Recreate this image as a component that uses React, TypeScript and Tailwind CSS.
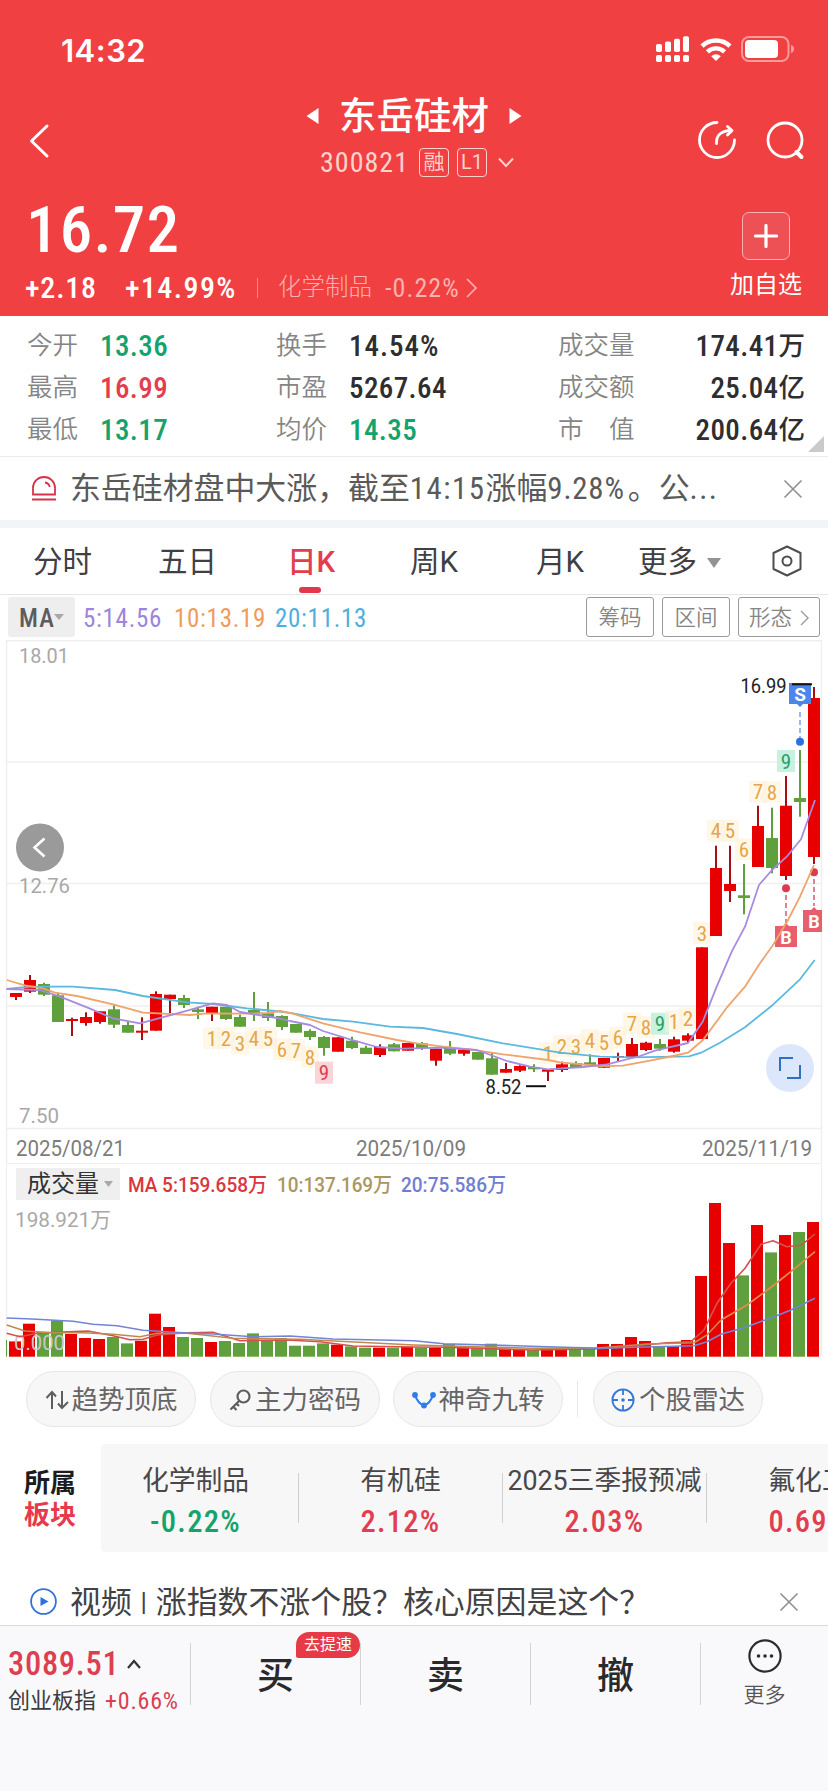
import type { ReactNode } from "react";

const RED = "#e80000";
const GREEN = "#5f9f3c";

// [direction, body top, body bottom, high, low]
const candles: [number, number, number, number, number][] = [
  [1, 353, 357, 353, 360], [1, 340, 351.7, 335, 353], [0, 344, 354.7, 342.7, 356], [0, 355.3, 382, 352.7, 382],
  [1, 379, 381, 377.7, 396], [1, 377, 383, 372.3, 385.7], [1, 371.3, 382, 371.3, 383.7], [0, 369.3, 384.7, 365.3, 388],
  [0, 385, 392.7, 381.7, 392.7], [1, 390.7, 392.7, 377.3, 400], [1, 354, 390.7, 351.3, 390.7], [1, 354.7, 359, 354.7, 373],
  [0, 358, 365, 355, 368], [0, 369.3, 372, 366.7, 379], [1, 366.7, 373, 366.7, 381], [0, 366.7, 379, 366.7, 380],
  [0, 377, 386.7, 374.7, 386.7], [0, 370, 374, 352, 381], [0, 373.3, 378, 362, 381], [0, 376, 387, 375.3, 390],
  [0, 384, 392.7, 384, 392.7], [0, 391, 397, 389.3, 400], [0, 397, 408, 396, 415.7], [1, 397.3, 411.7, 397.3, 411.7],
  [0, 400.7, 408, 396.7, 409], [0, 407.7, 414, 405.7, 414], [1, 407, 415, 404.3, 417], [0, 404.3, 411.3, 403, 411.3],
  [1, 403, 410.7, 403, 410.7], [0, 403.3, 408, 402, 410], [1, 408.7, 420.7, 408.7, 425.7], [0, 407.7, 413.7, 401, 415],
  [1, 409.7, 413.7, 408, 415.7], [0, 412, 419.7, 412, 419.7], [0, 418.3, 434.7, 412.7, 434.7], [1, 429, 432.7, 423, 432.7],
  [1, 426, 430.7, 425.3, 432], [0, 427, 429.3, 424.3, 432], [1, 429.3, 431.7, 429.3, 441], [1, 424.3, 430, 421.7, 432],
  [0, 423, 427, 421.3, 428], [0, 422.3, 425.3, 414.3, 426], [1, 418, 427.7, 418, 427.7], [1, 416, 418, 412.7, 421.7],
  [1, 404, 417, 398, 417], [1, 402.7, 410, 401.7, 411], [0, 404, 408.7, 399, 410.7], [1, 399.3, 411.7, 396.7, 412.7],
  [1, 395.3, 400.7, 393.3, 402.3], [1, 307.3, 399, 307.3, 399], [1, 228, 296, 205.7, 296], [1, 244, 251, 205.7, 262],
  [0, 255.3, 258, 224, 274.3], [1, 186, 227, 165.7, 227], [0, 198, 228, 167.7, 233.3], [1, 165.7, 236, 136, 240],
  [0, 158, 162, 110, 176.7], [1, 58, 217, 47, 224],
];

const volumes = [
  15.3, 33, 25, 36.3, 22.7, 18.7, 17.7, 19.7, 13.3, 16, 43, 29.7, 19.7, 18.7, 14.7, 15.7, 13.7, 23.3, 16, 18.7,
  11, 11, 13.3, 12, 10.3, 9, 9, 9, 10, 9, 8.7, 12.7, 9.3, 9.3, 13, 8, 7.3, 6.7, 7.7, 7.7,
  7.3, 8.7, 12.7, 12.7, 19.7, 15.7, 10, 10.7, 16.7, 80.7, 153.7, 113.7, 81.3, 131.7, 104.3, 121.7, 124.7, 134.7,
];

// nine-turn counters: [candle index, label, center y]
const turns: [number, string, number][] = [
  [14, "1", 398.3], [15, "2", 398.3], [16, "3", 403.3], [17, "4", 398.3], [18, "5", 398.3], [19, "6", 409],
  [20, "7", 410], [21, "8", 417.3], [22, "9", 432.7],
  [38, "1", 413.3], [39, "2", 406], [40, "3", 406], [41, "4", 400], [42, "5", 402], [43, "6", 397.7],
  [44, "7", 383.3], [45, "8", 387], [46, "9", 383.7], [47, "1", 381.3], [48, "2", 378.3], [49, "3", 293],
  [50, "4", 190.7], [51, "5", 190.7], [52, "6", 209], [53, "7", 151.7], [54, "8", 152.3], [55, "9", 121],
];

const stats = [
  [
    { label: "今开", value: "13.36", color: "text-[#13a36b]" },
    { label: "最高", value: "16.99", color: "text-[#e23e50]" },
    { label: "最低", value: "13.17", color: "text-[#13a36b]" },
  ],
  [
    { label: "换手", value: "14.54%", color: "text-[#2e2e30]" },
    { label: "市盈", value: "5267.64", color: "text-[#2e2e30]" },
    { label: "均价", value: "14.35", color: "text-[#13a36b]" },
  ],
];

const totals = [
  { label: "成交量", value: "174.41", unit: "万" },
  { label: "成交额", value: "25.04", unit: "亿" },
  { label: "市　值", value: "200.64", unit: "亿" },
];

const sectors = [
  { name: "化学制品", value: "-0.22%", color: "text-[#13a36b]" },
  { name: "有机硅", value: "2.12%", color: "text-[#e23e50]" },
  { name: "2025三季报预减", value: "2.03%", color: "text-[#e23e50]" },
  { name: "氟化工", value: "0.69%", color: "text-[#e23e50]" },
];

const Num = ({ className = "", children }: { className?: string; children: ReactNode }) => (
  <span className={`inline-block whitespace-nowrap [font-stretch:75%] ${className}`}>{children}</span>
);

// svg label stretched to an exact width
const Label = ({ x, y, w, size = 21, fill = "#a8a8a8", children }: { x: number; y: number; w: number; size?: number; fill?: string; children: string }) => (
  <text x={x} y={y} fontSize={size} fill={fill} textLength={w} lengthAdjust="spacingAndGlyphs">{children}</text>
);

const Close = () => (
  <svg className="w-5 h-5" viewBox="0 0 20 20" fill="none" stroke="#8f8f8f" strokeWidth="1.6">
    <path d="M1.5 1.5 18.5 18.5M18.5 1.5 1.5 18.5" />
  </svg>
);

const StatusBar = () => (
  <div className="h-[98px] flex items-center justify-between pl-[61px] pr-[33px]">
    <span className="font-['Inter'] font-semibold text-[31px] leading-none tracking-[0.5px] pt-[2px]">14:32</span>
    <div className="flex items-center">
      <svg className="w-[34px] h-[28px]" viewBox="0 0 34 28" fill="white">
        {[0, 1, 2, 3].map((i) => (
          <g key={i}>
            <rect x={i * 9} y={9 - i * 2.6} width="6" height={8 + i * 2.6} rx="1.8" />
            <rect x={i * 9} y="20" width="6" height="7" rx="1.8" />
          </g>
        ))}
      </svg>
      <svg className="w-[32px] h-[24px] ml-[10px]" viewBox="0 0 32 24" fill="none" stroke="white" strokeWidth="5">
        <path d="M2 9.2a20 20 0 0 1 28 0" strokeWidth="4.6" />
        <path d="M7.4 14.8a12.4 12.4 0 0 1 17.2 0" strokeWidth="4.4" />
        <path d="M16 24l-4.8-4.8a6.6 6.6 0 0 1 9.6 0z" fill="white" stroke="none" />
      </svg>
      <svg className="w-[54px] h-[26px] ml-[9px]" viewBox="0 0 54 26">
        <rect x="1" y="1" width="46.5" height="24" rx="7" fill="none" stroke="#f79a9b" strokeWidth="2" />
        <rect x="4" y="4" width="33" height="18" rx="4" fill="white" />
        <path d="M50 9v8c2-.6 3-2 3-4s-1-3.400-3-4z" fill="#f79a9b" />
      </svg>
    </div>
  </div>
);

const Header = () => (
  <header className="h-[316px] bg-[#f04042] text-white">
    <StatusBar />
    <div className="h-[88px] flex justify-between px-[28px]">
      <svg className="w-[22px] h-[36px] mt-[25px]" viewBox="0 0 22 36" fill="none" stroke="white" strokeWidth="3" strokeLinecap="round" strokeLinejoin="round">
        <path d="M19 3 3.500 18 19 33" />
      </svg>
      <div className="flex flex-col items-center pl-[81px]">
        <div className="flex items-center h-[36px]">
          <svg className="w-[13px] h-[18px]" viewBox="0 0 13 18" fill="white"><path d="M12.500 1v16L.5 9z" /></svg>
          <h1 className="text-[37.500px] leading-none font-medium mx-[20px] pt-[2px]">东岳硅材</h1>
          <svg className="w-[13px] h-[18px]" viewBox="0 0 13 18" fill="white"><path d="M.5 1v16l12-8z" /></svg>
        </div>
        <div className="flex items-center h-[30px] mt-[13px] ml-[6px] text-[#fdd3cc]">
          <Num className="text-[28px] leading-none tracking-[1px] pt-[2px]">300821</Num>
          <span className="w-[30px] h-[29px] ml-[10px] border border-[#fdd3cc] rounded-[4px] flex items-center justify-center text-[21px] leading-none">融</span>
          <span className="w-[30px] h-[29px] ml-[8px] border border-[#fdd3cc] rounded-[4px] flex items-center justify-center text-[20px] leading-none">L1</span>
          <svg className="w-[16px] h-[11px] ml-[11px]" viewBox="0 0 16 11" fill="none" stroke="#fdd3cc" strokeWidth="2"><path d="M1 1.500 8 9l7-7.500" /></svg>
        </div>
      </div>
      <div className="flex items-start pt-[22px] -mr-[6px]">
        <svg className="w-[40px] h-[40px]" viewBox="0 0 40 40" fill="none" stroke="white" strokeWidth="2.800" strokeLinecap="round" strokeLinejoin="round">
          <path d="M20 2.500A17.500 17.500 0 1 0 37.500 20" />
          <path d="M19.500 23.500c-.4-8 4.500-13 15-13" />
          <path d="m30.500 6.500 4.500 4-4.500 4.500" />
        </svg>
        <svg className="w-[40px] h-[40px] ml-[29px]" viewBox="0 0 40 40" fill="none" stroke="white" strokeWidth="2.800" strokeLinecap="round">
          <circle cx="19" cy="20" r="17" />
          <path d="m30.500 32 5 5" strokeWidth="4" />
        </svg>
      </div>
    </div>
    <div className="h-[130px] flex justify-between">
      <div className="pl-[26px]">
        <div className="h-[84px] flex items-center pt-[4px]">
          <Num className="text-[65px] leading-none font-medium tracking-[1.200px]">16.72</Num>
        </div>
        <div className="h-[36px] flex items-center text-[30px] leading-none">
          <Num className="font-medium tracking-[0.8px] w-[100px] -ml-px">+2.18</Num>
          <Num className="font-medium tracking-[1.400px] w-[132px]">+14.99%</Num>
          <span className="w-px h-5 bg-[#f58a8b]" />
          <span className="ml-[20px] text-[23.500px] font-light text-[#fbb3b0]">化学制品</span>
          <Num className="ml-[13px] text-[26px] text-[#fbb3b0] tracking-[1.100px]">-0.22%</Num>
          <svg className="w-[12px] h-[20px] ml-[6px]" viewBox="0 0 12 20" fill="none" stroke="#fbb3b0" strokeWidth="1.600"><path d="m1 1 9 9-9 9" /></svg>
        </div>
      </div>
      <div className="flex flex-col items-center pt-[26px] pr-[26px]">
        <div className="w-[48px] h-[48px] border border-[#f9b5b5] rounded-[7px] bg-[#ee5155] flex items-center justify-center">
          <svg className="w-6 h-6" viewBox="0 0 24 24" stroke="white" strokeWidth="3.200" strokeLinecap="round"><path d="M12 1.500v21M1.500 12h21" /></svg>
        </div>
        <span className="text-[24px] leading-none mt-[13px]">加自选</span>
      </div>
    </div>
  </header>
);

const Stats = () => (
  <section className="relative h-[141px] border-b border-[#ebebeb] flex pt-[9px] pl-[27px] leading-none">
    {stats.map((column, c) => (
      <div key={c} className={c === 0 ? "w-[249px]" : "w-[282px]"}>
        {column.map((s) => (
          <div key={s.label} className="h-[42px] flex items-center">
            <span className="w-[73px] text-[25.500px] [font-weight:350] text-[#858585]">{s.label}</span>
            <Num className={`text-[29px] font-medium ${s.value.endsWith("%") ? "tracking-[1px]" : "tracking-[0.4px]"} ${s.color}`}>{s.value}</Num>
          </div>
        ))}
      </div>
    ))}
    <div className="w-[247px]">
      {totals.map((s) => (
        <div key={s.label} className="h-[42px] flex items-center justify-between">
          <span className="text-[25.500px] [font-weight:350] text-[#858585]">{s.label}</span>
          <span className="flex items-center text-[#2e2e30]">
            <Num className="text-[29px] font-medium tracking-[0.4px]">{s.value}</Num>
            <span className="text-[26.500px] font-medium">{s.unit}</span>
          </span>
        </div>
      ))}
    </div>
    <svg className="absolute right-[4px] bottom-[4px] w-4 h-4" viewBox="0 0 16 16" fill="#cacaca"><path d="M16 0v16H0z" /></svg>
  </section>
);

const Notice = () => (
  <section className="h-[71px] border-b-8 border-[#f1f5f7] flex items-center pl-[32px] pr-[25px]">
    <svg className="w-[24px] h-[25px]" viewBox="0 0 24 25" fill="none" stroke="#d9314a" strokeWidth="1.800">
      <path d="M1 18.500V12a11 11 0 0 1 22 0v6.500z" />
      <path d="M13 6.500c2.600.4 4.300 2 4.800 4.500M0 23.500h24" />
    </svg>
    <p className="ml-[14px] pt-[2px] flex-1 text-[30.900px] leading-none text-[#5a5a5a] whitespace-nowrap">
      东岳硅材盘中大涨，截至<Num className="tracking-[1.500px]">14:15</Num>涨幅<Num className="tracking-[0.800px] mr-[3px]">9.28%</Num>。公<span className="tracking-[1.500px]">...</span>
    </p>
    <Close />
  </section>
);

const Tabs = () => (
  <nav className="h-[67px] border-b border-[#e6e6e6] flex items-center pt-[3px] pl-[33px] text-[29.500px] leading-none text-[#404042]">
    <span className="w-[125px]">分时</span>
    <span className="w-[129px]">五日</span>
    <span className="relative w-[123px] font-medium text-[#e23e50]">
      日K
      <i className="absolute left-[12px] top-[39px] w-[22px] h-[6px] rounded-full bg-[#e2394a]" />
    </span>
    <span className="w-[126px]">周K</span>
    <span className="w-[102px]">月K</span>
    <span>更多</span>
    <svg className="w-[14px] h-[10px] ml-[10px]" viewBox="0 0 14 10" fill="#939393"><path d="M0 0h14L7 10z" /></svg>
    <svg className="w-[30px] h-[32px] ml-[51px] -mt-[3px]" viewBox="0 0 30 32" fill="none" stroke="#4d4d4f" strokeWidth="2" strokeLinejoin="round">
      <path d="M15 1.500 28.500 8v16L15 30.500 1.500 24V8z" />
      <circle cx="15" cy="16" r="4.500" />
    </svg>
  </nav>
);

const PriceHeader = () => (
  <div className="h-[45px] pt-[2px] pl-[8px] pr-[8px] flex leading-none">
    <div className="w-[67px] h-[40px] bg-[#eeeeee] rounded-[3px] flex items-center pl-[11px] text-[25px] font-medium text-[#5c5c5c]">
      <Num className="w-[35px] pt-[3px] tracking-[1px]">MA</Num>
      <svg className="w-[10px] h-[6px]" viewBox="0 0 10 6" fill="#a9a9a9"><path d="M0 0h10L5 6z" /></svg>
    </div>
    <div className="flex items-center h-[40px] pl-[8px] pt-[3px] text-[25px] tracking-[0.7px]">
      <Num className="w-[91px] text-[#9c85dc]">5:14.56</Num>
      <Num className="w-[101px] text-[#f09a5c]">10:13.19</Num>
      <Num className="text-[#4bb0dd]">20:11.13</Num>
    </div>
    <div className="ml-auto flex gap-2 text-[21.500px] [font-weight:350] text-[#858585]">
      <span className="w-[68px] h-[40px] pt-px border border-[#9a9a9a] rounded-[3px] flex items-center justify-center">筹码</span>
      <span className="w-[68px] h-[40px] pt-px border border-[#9a9a9a] rounded-[3px] flex items-center justify-center">区间</span>
      <span className="w-[82px] h-[40px] pt-px border border-[#9a9a9a] rounded-[3px] flex items-center justify-center">
        形态
        <svg className="w-[9px] h-[16px] ml-[8px]" viewBox="0 0 9 16" fill="none" stroke="#9a9a9a" strokeWidth="1.400"><path d="m1 1 7 7-7 7" /></svg>
      </span>
    </div>
  </div>
);

const Turn = ({ i, label, y }: { i: number; label: string; y: number }) => {
  const x = 16 + i * 14;
  const red = i === 22;
  const green = label === "9" && !red;
  return (
    <g>
      <rect x={x - 9} y={y - 11} width="18" height="22" fill={red ? "#fbcfd3" : green ? "#c3efdd" : "#fff1d9"} fillOpacity={red || green ? 0.9 : 0.6} />
      <text className="[font-stretch:75%]" x={x} y={y + 7.500} fontSize="21" textAnchor="middle" fill={red ? "#d9404f" : green ? "#2b9f6b" : "#e5a548"}>{label}</text>
    </g>
  );
};

const PriceChart = () => (
  <svg className="block w-full h-[523px]" viewBox="0 0 828 523">
    <g stroke="#efefef" strokeWidth="1.500">
      <path d="M6 .8h816M6 122h816M6 243.500h816M6 366h816M6 488.500h816M6.500 0v523M821.500 0v523" />
    </g>
    <Label x={19} y={23} w={50}>18.01</Label>
    <Label x={19} y={253} w={51}>12.76</Label>
    <Label x={19} y={482.500} w={40}>7.50</Label>
    {turns.map(([i, label, y]) => <Turn key={i} i={i} label={label} y={y} />)}
    {candles.map(([up, top, bottom, high, low], i) => (
      <g key={i} fill={up ? RED : GREEN}>
        <rect x={15 + i * 14} y={high} width="2" height={low - high} fill={up ? "#a80f14" : GREEN} />
        <rect x={10 + i * 14} y={top} width="12" height={bottom - top} />
      </g>
    ))}
    <g>
      <path d="M800 72v27" stroke="#8fb0ee" strokeWidth="1.800" strokeDasharray="5 3" />
      <circle cx="800" cy="101.700" r="4" fill="#2b6fe0" />
      <path d="M789 43h22v21h-8l-3 3-3-3h-8z" fill="#4a86ec" />
      <text x="800" y="60.500" fontSize="19" fontWeight="700" textAnchor="middle" fill="white">S</text>
      <path d="M792 44.300h20" stroke="#111" strokeWidth="2" />
      <Label x={740.500} y={52.500} w={46} size={20} fill="#222">16.99</Label>
      <Label x={485.500} y={454} w={36} size={20} fill="#222">8.52</Label>
      <path d="M526 446.200h20" stroke="#111" strokeWidth="2" />
    </g>
    <g>
      <path d="M786 255v28M814 239v27" stroke="#e0708a" strokeWidth="1.800" strokeDasharray="5 3" />
      <circle cx="786" cy="248.300" r="4" fill="#e0394e" />
      <circle cx="814" cy="232.300" r="4" fill="#e0394e" />
      <path d="M775 286h8l3-3 3 3h8v21h-22zM803 270h8l3-3 3 3h5v22h-19z" fill="#e85e6c" />
      <text x="786" y="303.500" fontSize="18" fontWeight="700" textAnchor="middle" fill="white">B</text>
      <text x="814" y="288" fontSize="18" fontWeight="700" textAnchor="middle" fill="white">B</text>
    </g>
    <g fill="none" strokeWidth="1.800" strokeLinejoin="round">
      <polyline stroke="#5bb9e0" points="6.500,349 30,346.700 73,346.700 115,350 143,356 187,362.300 213,364 247,368.300 280,371.500 293,373.300 323,379 353,381.700 390,386.700 423,388 457,394 503,403.300 548,410.700 560,412.700 600,416.700 633,417.300 689,416.300 702,412.300 720,402.700 745,387.300 773,364.700 800,339.300 814.700,320" />
      <polyline stroke="#f0a36c" points="6.700,340 25,345.300 43,348.300 55,352.700 77,356 113,364.300 143,372.700 190,375 207,373.300 247,373.700 267,373 280,371 293,373.700 323,383.300 360,392.300 397,400 417,403.300 443,406.700 470,409.300 503,414.300 548,420 560,422.300 600,426 623,425.700 650,420.700 673,416 688,412.700 703,400 727,367.300 745,346.700 760,323.300 773,305 788,280 800,256.700 814,225" />
      <polyline stroke="#a78be0" points="6.700,349 40,350 60,356.700 87,367.300 113,378.300 140,383.300 180,372.700 213,363.300 227,365 240,372 280,378.500 290,381 310,385 323,391 350,399.300 377,407 403,408.700 443,407.700 477,410 507,421 530,426.700 548,429.300 583,427 607,424.300 640,416 655,410.700 688,403 702.700,381.700 716.700,346.700 731.700,311.700 745,286.700 759,245 772,230 786.700,216.700 801,199.300 815,160" />
    </g>
    <circle cx="40" cy="207.500" r="24" fill="#9a9a9a" />
    <path d="m44.500 198.500-10 9 10 9" fill="none" stroke="white" strokeWidth="2.600" />
    <circle cx="790" cy="428" r="24" fill="#dce7fb" />
    <path d="M780 431v-13h13M800 425v13h-13" fill="none" stroke="#2f6fc4" strokeWidth="2" />
    <Label x={16} y={515.500} w={109} size={22.500} fill="#7c7c7c">2025/08/21</Label>
    <Label x={356} y={515.500} w={110} size={22.500} fill="#7c7c7c">2025/10/09</Label>
    <Label x={702} y={515.500} w={110} size={22.500} fill="#7c7c7c">2025/11/19</Label>
  </svg>
);

const VolumeHeader = () => (
  <div className="h-[37px] mx-[6px] border-x border-t border-[#efefef] pt-[4px] pl-[9px] flex leading-none">
    <div className="w-[104px] h-[32px] bg-[#efefef] flex items-center pl-[11px] text-[24px] text-[#333]">
      成交量
      <svg className="w-[9px] h-[6px] ml-[5px]" viewBox="0 0 9 6" fill="#a9a9a9"><path d="M0 0h9L4.500 6z" /></svg>
    </div>
    <svg className="w-[400px] h-[32px]" viewBox="120 0 400 32">
      <g fontWeight="500">
        <Label x={128} y={24} w={139} size={20} fill="#d9363e">MA 5:159.658万</Label>
        <Label x={277} y={24} w={115} size={20} fill="#ab9660">10:137.169万</Label>
        <Label x={401} y={24} w={105} size={20} fill="#6f7ed0">20:75.586万</Label>
      </g>
    </svg>
  </div>
);

const VolumeChart = () => (
  <svg className="block w-full h-[158px]" viewBox="0 0 828 158">
    <path d="M6.500 0v156M821.500 0v156" stroke="#efefef" strokeWidth="1.500" />
    <Label x={15} y={27} w={96}>198.921万</Label>
    <rect x="6" y="140" width="1" height="16.700" fill={GREEN} />
    {volumes.map((h, i) => (
      <rect key={i} x={9 + i * 14} y={156.700 - h} width="12" height={h} fill={candles[i][0] ? RED : GREEN} />
    ))}
    <Label x={14} y={149.500} w={51} fill="#c9c9c9">0.000</Label>
    <g fill="none" strokeWidth="1.600" strokeLinejoin="round">
      <polyline stroke="#d8504e" points="6.700,133.300 20,136.700 37,133.300 67,131.700 88,131 113,135.700 130,139.700 143,139.300 157,135 187,132.700 213,132.300 240,140.700 287,140 320,141.700 353,146 414,147 447,147.300 531,150 594,149 627,146.700 667,142.700 691,141.700 704,130 717,103.300 731,83.300 745,68.300 761,44.300 773,40.700 787,46.700 801,45.300 815,34" />
      <polyline stroke="#c08a4c" points="6.700,125 25,131 50,132.700 83,132.700 113,134.300 140,136.700 157,133.300 187,133.300 233,138.300 300,139.300 414,145 531,148.300 594,148.300 647,144 694,142.700 707,135 721,120" />
      <polyline stroke="#e88a50" points="721,120 747,105 774,85 797,66.700 815,51.700" />
      <polyline stroke="#7384d6" points="6.700,118 32,119 73,121.300 93,124.300 117,125.700 143,130.300 187,133 213,134 253,136.700 290,136 333,139 414,140.700 444,143.700 547,146.700 601,148.300 654,146.700 694,145.700 707,141.700 721,134.300 747,126.700 774,116.700 791,110 815,98.300" />
    </g>
  </svg>
);

const pill = "w-[170px] h-[56px] pt-[2px] rounded-full border border-[#e6e6e6] bg-[#f8f7f8] flex items-center justify-center text-[26.500px] leading-none text-[#666]";

const Tools = () => (
  <div className="flex items-center mt-[13px] pl-[26px]">
    <span className={pill}>
      <svg className="w-[24px] h-[20px] mr-[3px]" viewBox="0 0 24 20" fill="none" stroke="#5e5e5e" strokeWidth="2">
        <path d="M7 19V2M1.500 8 7 2l4 4.500M17 1v17M23 12l-6 6-4-4.500" />
      </svg>
      趋势顶底
    </span>
    <span className={`${pill} ml-[14px]`}>
      <svg className="w-[22px] h-[22px] mr-[4px]" viewBox="0 0 22 22" fill="none" stroke="#5e5e5e" strokeWidth="2.200">
        <circle cx="14.500" cy="7.500" r="6" />
        <path d="M10.300 11.700 1.500 20.500M3.500 17l4 4M7 14l3 3" />
      </svg>
      主力密码
    </span>
    <span className={`${pill} ml-[13px]`}>
      <svg className="w-[24px] h-[18px] mr-[3px]" viewBox="0 0 24 18" fill="#2f7de8" stroke="#2f7de8" strokeWidth="2.200">
        <path d="M3 4c2 6 4 9 9 10.500C17 13 19 10 21 4" fill="none" />
        <circle cx="3" cy="4" r="1.800" /><circle cx="12" cy="14.500" r="1.800" /><circle cx="21" cy="4" r="1.800" />
      </svg>
      神奇九转
    </span>
    <span className="w-px h-[36px] bg-[#e6e6e6] ml-[14px] mr-[15px]" />
    <span className={pill}>
      <svg className="w-[24px] h-[24px] mr-[4px]" viewBox="0 0 24 24" fill="none" stroke="#3478d8" strokeWidth="1.800">
        <circle cx="12" cy="12" r="10.600" />
        <path d="M12 1v6M12 17v6M1 12h6M17 12h6" />
        <circle cx="12" cy="12" r="1.800" fill="#3478d8" stroke="none" />
      </svg>
      个股雷达
    </span>
  </div>
);

const Sectors = () => (
  <section className="flex h-[108px] mt-[17px] overflow-hidden leading-none">
    <div className="w-[101px] shrink-0 pl-[24px] pt-[26px] text-[26px] font-bold">
      <p className="text-[#1c1c1e] h-[32px]">所属</p>
      <p className="text-[#e6394b]">板块</p>
    </div>
    <div className="flex items-center bg-[#f7f7f7] rounded-l-[4px]">
      {sectors.map((s, i) => (
        <div key={s.name} className={`h-[108px] shrink-0 flex items-center ${i === 0 ? "w-[198px]" : "w-[204px]"}`}>
          <div className={`flex-1 flex flex-col items-center whitespace-nowrap pt-[10px] ${i === 0 ? "pr-[8px]" : ""}`}>
            <span className="text-[26.800px] text-[#48484a] h-[28px]">{s.name}</span>
            <Num className={`text-[30.500px] font-medium tracking-[1.300px] mt-[11px] ${s.color}`}>{s.value}</Num>
          </div>
          <span className="w-px h-[50px] bg-[#d0d0d0]" />
        </div>
      ))}
    </div>
  </section>
);

const VideoRow = () => (
  <section className="h-[73px] flex items-center pl-[30px] pr-[29px] pt-[26px]">
    <svg className="w-[27px] h-[27px]" viewBox="0 0 27 27" fill="none" stroke="#3472d8" strokeWidth="1.800">
      <circle cx="13.500" cy="13.500" r="12.400" />
      <path d="M10.500 9v9l8-4.500z" fill="#2f6fe0" stroke="none" />
    </svg>
    <p className="ml-[13px] pt-[4px] flex-1 flex items-center text-[30.900px] leading-none text-[#424244] whitespace-nowrap">
      <span>视频</span>
      <span className="text-[24px]">丨</span>
      <span>涨指数不涨个股？核心原因是这个？</span>
    </p>
    <Close />
  </section>
);

const actions = ["买", "卖", "撤"];

const BottomBar = () => (
  <footer className="h-[166px] border-t border-[#dcdcdf] bg-[#f9f9fc] flex leading-none pt-[17px]">
    <div className="w-[190px] pl-[8px] pt-[5px]">
      <div className="flex items-center h-[32px] text-[#dd3e50]">
        <Num className="text-[32.500px] font-medium tracking-[0.7px] w-[119px]">3089.51</Num>
        <svg className="w-[14px] h-[10px]" viewBox="0 0 14 10" fill="none" stroke="#333" strokeWidth="2.200"><path d="m1 9 6-7 6 7" /></svg>
      </div>
      <div className="flex items-center h-[28px] mt-[7px]">
        <span className="text-[22px] text-[#3c3c3e] w-[97px]">创业板指</span>
        <Num className="text-[24px] tracking-[0.8px] text-[#dd3e50]">+0.66%</Num>
      </div>
    </div>
    {actions.map((action) => (
      <div key={action} className="relative w-[170px] h-[62px] pt-[5px] border-l border-[#d3d3d6] flex items-center justify-center text-[37px] font-medium text-[#2a2a2c]">
        {action}
        {action === "买" && (
          <span className="absolute left-[105px] -top-[11px] w-[64px] h-[26px] rounded-[13px] rounded-bl-[2px] bg-[#e63a46] text-white text-[16px] font-normal flex items-center justify-center">去提速</span>
        )}
      </div>
    ))}
    <div className="flex-1 h-[62px] border-l border-[#d3d3d6] flex flex-col items-center">
      <svg className="w-[34px] h-[34px] -mt-[4px] shrink-0" viewBox="0 0 34 34" fill="none" stroke="#2c2c2e" strokeWidth="2.200">
        <circle cx="17" cy="17" r="15.600" />
        <g fill="#2c2c2e" stroke="none"><circle cx="10.500" cy="17" r="1.800" /><circle cx="17" cy="17" r="1.800" /><circle cx="23.500" cy="17" r="1.800" /></g>
      </svg>
      <span className="text-[21px] text-[#555] [font-weight:350] mt-[12px]">更多</span>
    </div>
  </footer>
);

export default function App() {
  return (
    <main className="w-[828px] h-[1792px] overflow-hidden bg-white flex flex-col font-['Roboto','Noto_Sans_CJK_SC',sans-serif]">
      <Header />
      <Stats />
      <Notice />
      <Tabs />
      <PriceHeader />
      <PriceChart />
      <VolumeHeader />
      <VolumeChart />
      <Tools />
      <Sectors />
      <VideoRow />
      <BottomBar />
    </main>
  );
}
